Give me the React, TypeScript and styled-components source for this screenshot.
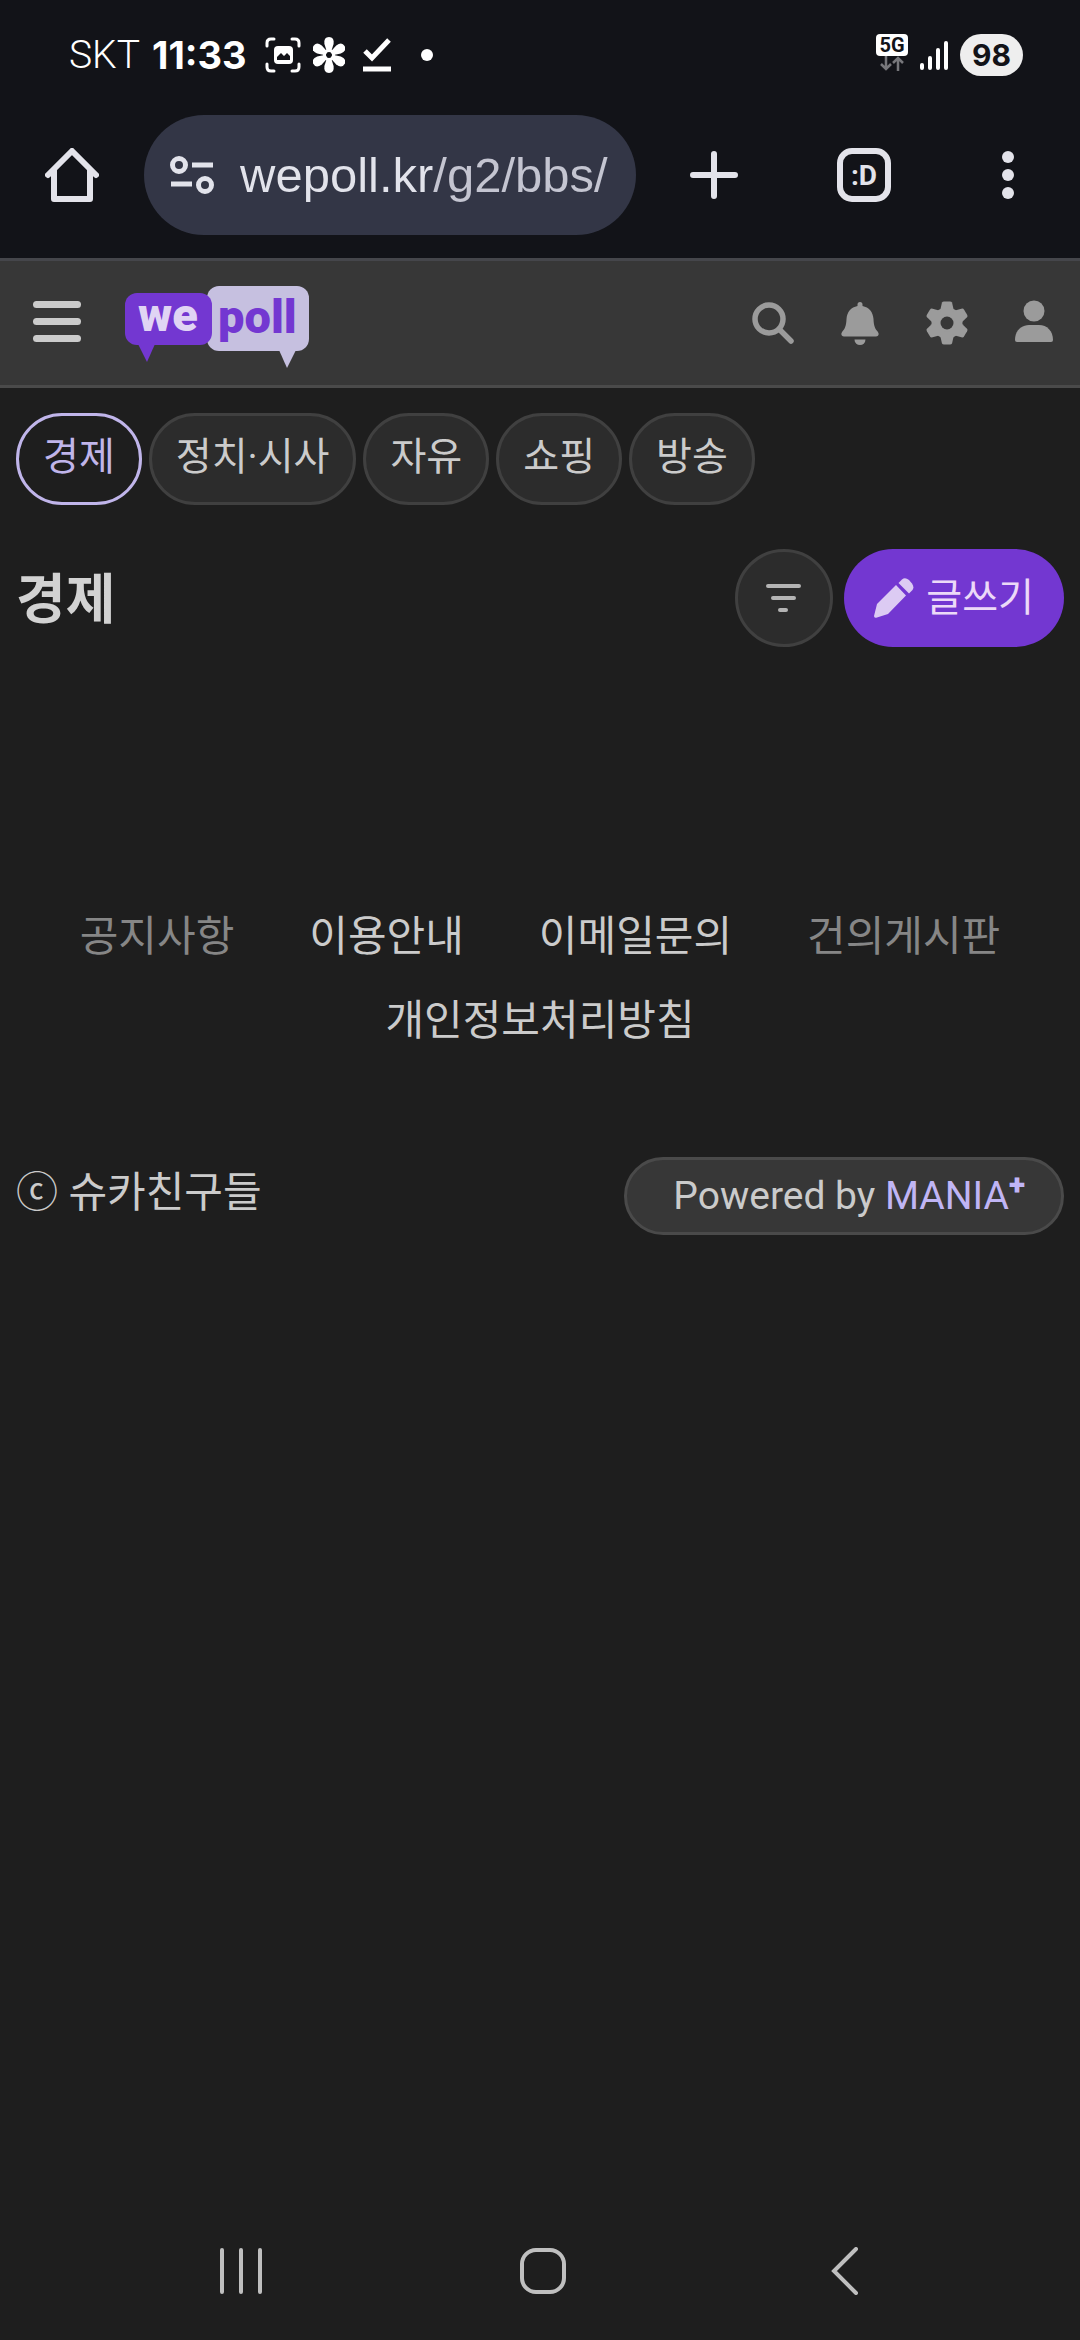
import React from "react";
import styled, { createGlobalStyle } from "styled-components";

const GlobalStyle = createGlobalStyle`
  *, *::before, *::after { box-sizing: border-box; }
  html, body { margin: 0; background: #1e1e1e; }
  body { font-family: Roboto, "Noto Sans CJK KR", sans-serif; color: #cbcbcb; }
  button, input { font: inherit; color: inherit; margin: 0; padding: 0; border: 0; background: none; outline: none; }
  button { cursor: pointer; }
  a { color: inherit; text-decoration: none; }
  svg { display: block; flex: none; }
`;

const Screen = styled.div`
  display: flex;
  flex-direction: column;
  min-height: 100vh;
`;

const Chrome = styled.div`
  background: #121318;
  padding-bottom: 23px;
`;

const StatusBar = styled.div`
  display: flex;
  align-items: center;
  justify-content: space-between;
  height: 110px;
  padding: 0 57px 0 69px;
  color: #fff;
`;

const StatusGroup = styled.div`
  display: flex;
  align-items: center;
  gap: 12px;
`;

const Carrier = styled.span`
  font-size: 39px;
  font-weight: 300;
`;

const Clock = styled.span`
  font: 700 38px Inter, sans-serif;
  margin-right: 6px;
`;

const Network = styled.div`
  display: flex;
  flex-direction: column;
  align-items: center;
  width: 32px;
  height: 38px;
  margin-bottom: 4px;
`;

const NetworkBadge = styled.span`
  width: 100%;
  border-radius: 4px;
  background: #fff;
  color: #121318;
  font-size: 20px;
  font-weight: 700;
  line-height: 22px;
  text-align: center;
`;

const Battery = styled.span`
  width: 63px;
  border-radius: 21px;
  background: #eee;
  color: #121318;
  font: 700 30px/42px Inter, sans-serif;
  text-align: center;
`;

const BrowserBar = styled.div`
  display: flex;
  align-items: center;
  padding-top: 5px;
  color: #e3e3ea;
`;

const BarButton = styled.button<{ $width: number }>`
  display: flex;
  align-items: center;
  justify-content: center;
  width: ${(p) => p.$width}px;
  height: 120px;
`;

const AddressPill = styled.div`
  display: flex;
  flex: 1;
  min-width: 0;
  align-items: center;
  gap: 25px;
  height: 120px;
  padding: 0 22px 0 25px;
  border-radius: 60px;
  background: #333646;
`;

/* The host name is drawn brighter than the path that follows it. */
const Address = styled.input`
  flex: 1;
  min-width: 0;
  height: 60px;
  font-family: "Liberation Sans", sans-serif;
  font-size: 49px;
  line-height: 60px;
  color: #e2e3eb;
  background: linear-gradient(90deg, #e2e3eb 0 193px, #c4c5d1 193px);
  background-clip: text;
  -webkit-background-clip: text;
  -webkit-text-fill-color: transparent;
`;

const TabCount = styled.span`
  display: flex;
  align-items: center;
  justify-content: center;
  width: 54px;
  height: 54px;
  border: 6px solid currentColor;
  border-radius: 15px;
  font-size: 28px;
  font-weight: 700;
`;

const SiteHeader = styled.header`
  display: flex;
  align-items: center;
  height: 130px;
  padding: 0 3px 0 33px;
  border-top: 3px solid #45464b;
  border-bottom: 3px solid #4a4a4a;
  background: #373737;
`;

const MenuButton = styled.button`
  display: flex;
  flex-direction: column;
  gap: 10px;
  width: 48px;
  margin-right: 44px;
  padding-bottom: 3px;
`;

const MenuLine = styled.span`
  height: 7px;
  border-radius: 4px;
  background: #cbcbcb;
`;

const LogoLink = styled.a`
  margin-top: 8px;
`;

const HeaderTools = styled.div`
  display: flex;
  margin-left: auto;
  color: #9b9b9b;
`;

const HeaderButton = styled.button`
  display: flex;
  align-items: center;
  justify-content: center;
  width: 87px;
  height: 96px;
`;

const Content = styled.main`
  padding: 25px 16px 0;
`;

const Chips = styled.nav`
  display: flex;
  flex-wrap: wrap;
  gap: 7px;
`;

const Chip = styled.a<{ $active?: boolean }>`
  padding: 13px 24px 17px;
  border: 3px solid ${(p) => (p.$active ? "#c0b5ea" : "#404040")};
  border-radius: 46px;
  background: ${(p) => (p.$active ? "transparent" : "#2c2c2c")};
  color: ${(p) => (p.$active ? "#c0b5ea" : "#cbcbcb")};
  font-size: 39px;
  line-height: 56px;
`;

const TitleRow = styled.div`
  display: flex;
  align-items: center;
  gap: 11px;
  margin-top: 44px;
`;

const Title = styled.h1`
  flex: 1;
  margin: 0;
  padding-top: 6px;
  font-size: 54px;
  font-weight: 700;
  line-height: 80px;
  color: #d2d2d2;
`;

const FilterButton = styled.button`
  display: flex;
  align-items: center;
  justify-content: center;
  width: 98px;
  height: 98px;
  border: 3px solid #404040;
  border-radius: 49px;
  background: #2c2c2c;
`;

const WriteButton = styled.button`
  display: flex;
  align-items: center;
  gap: 12px;
  height: 98px;
  padding: 0 30px;
  border-radius: 49px;
  background: #7337d1;
  color: #ecd9f8;
  font-size: 39px;
  line-height: 56px;
`;

const Footer = styled.footer`
  margin-top: 248px;
  padding: 0 16px;
  font-size: 42px;
`;

const FooterLinks = styled.nav`
  display: flex;
  flex-wrap: wrap;
  justify-content: center;
  column-gap: 75px;
`;

const FooterLink = styled.a<{ $dim?: boolean }>`
  color: ${(p) => (p.$dim ? "#868686" : "#cbcbcb")};
  line-height: 84px;
`;

const Credits = styled.div`
  display: flex;
  align-items: center;
  justify-content: space-between;
  margin-top: 94px;
`;

const Copyright = styled.span`
  padding-bottom: 6px;
  line-height: 62px;
`;

const Powered = styled.a`
  padding: 0 36px 0 46px;
  border: 3px solid #4a4a4a;
  border-radius: 39px;
  background: #373737;
  font-size: 39px;
  line-height: 72px;
`;

const Brand = styled.span`
  color: #c0b5f5;
`;

const Plus = styled.sup`
  font-size: 30px;
  font-weight: 900;
  line-height: 0;
`;

const SystemNav = styled.nav`
  display: grid;
  grid-template-columns: repeat(3, 1fr);
  margin-top: auto;
  padding: 0 84px 0 90px;
  color: #bfbfbf;
`;

const SystemButton = styled.button`
  display: flex;
  align-items: center;
  justify-content: center;
  height: 138px;
`;

const Logo = () => (
  <svg width="184" height="82" viewBox="0 0 184 82" aria-label="wepoll" role="img">
    <rect x="82" y="0" width="102" height="65" rx="12" fill="#c6c0e0" />
    <path d="M154 64h17l-9 18z" fill="#c6c0e0" />
    <rect x="0" y="7" width="87" height="52" rx="12" fill="#7337d1" />
    <path d="M13 58h17l-8 18z" fill="#7337d1" />
    <text x="13" y="45" fontFamily="Roboto, sans-serif" fontSize="47" fontWeight="900" fill="#e0d4f4">we</text>
    <text x="93" y="47" fontFamily="Roboto, sans-serif" fontSize="47" fontWeight="900" fill="#7337d1">poll</text>
  </svg>
);

const CaptureIcon = () => (
  <svg width="36" height="36" viewBox="0 0 36 36" fill="none" stroke="#fff" strokeWidth="3" strokeLinecap="round">
    <path d="M2 9V6q0-4 4-4h3M27 2h3q4 0 4 4v3M34 27v3q0 4-4 4h-3M9 34H6q-4 0-4-4v-3" />
    <rect x="9" y="9" width="19" height="18" rx="4" fill="#fff" stroke="none" />
    <path d="M12 20l4-4 3 3 3-3 3 3v4H12z" fill="#121318" stroke="none" />
  </svg>
);

const FlowerIcon = () => (
  <svg width="32" height="36" viewBox="0 0 32 36" fill="#fff">
    {[0, 60, 120, 180, 240, 300].map((a) => (
      <path key={a} d="M14 15L11.400 7Q10.500 0 16 0T20.600 7L18 15z" transform={`rotate(${a} 16 18)`} />
    ))}
    <circle cx="16" cy="18" r="4.500" fill="none" stroke="#fff" strokeWidth="3" />
  </svg>
);

const CheckIcon = () => (
  <svg width="40" height="34" viewBox="-6 0 40 34" fill="none" stroke="#fff" strokeWidth="5">
    <path d="M2 13l7 7L26 2M0 31h28" />
  </svg>
);

const MoreDotIcon = () => (
  <svg width="36" height="12" viewBox="0 0 36 12">
    <circle cx="18" cy="6" r="6" fill="#fff" />
  </svg>
);

const SignalIcon = () => (
  <svg width="28" height="30" viewBox="0 0 28 30" stroke="#fff" strokeWidth="4" strokeLinecap="round">
    <path d="M2 25v3M10 18v10M18 10v18M26 3v25" />
  </svg>
);

const App = () => (
  <Screen>
    <GlobalStyle />
    <Chrome>
      <StatusBar>
        <StatusGroup>
          <Carrier>SKT</Carrier>
          <Clock>11:33</Clock>
          <CaptureIcon />
          <FlowerIcon />
          <CheckIcon />
          <MoreDotIcon />
        </StatusGroup>
        <StatusGroup>
          <Network>
            <NetworkBadge>5G</NetworkBadge>
            <svg width="24" height="15" viewBox="0 0 24 15" fill="none" stroke="#77777b" strokeWidth="2.5">
              <path d="M6 0v13M1 8l5 5 5-5M18 15V2M13 7l5-5 5 5" />
            </svg>
          </Network>
          <SignalIcon />
          <Battery>98</Battery>
        </StatusGroup>
      </StatusBar>
      <BrowserBar>
        <BarButton $width={144} aria-label="홈">
          <svg width="54" height="54" viewBox="0 0 54 54" fill="none" stroke="currentColor" strokeWidth="6" strokeLinecap="round" strokeLinejoin="round">
            <path d="M3 27L27 3l24 24M9 22v29h36V22" />
          </svg>
        </BarButton>
        <AddressPill>
          <svg width="46" height="38" viewBox="0 0 46 38" fill="none" stroke="#e2e3eb" strokeWidth="5">
            <circle cx="10" cy="9" r="6.5" />
            <path d="M23 9h21M2 28h21" />
            <circle cx="36" cy="29" r="6.5" />
          </svg>
          <Address type="text" aria-label="주소" defaultValue="wepoll.kr/g2/bbs/" />
        </AddressPill>
        <BarButton $width={156} aria-label="새 탭">
          <svg width="48" height="48" viewBox="0 0 48 48" stroke="currentColor" strokeWidth="6" strokeLinecap="round">
            <path d="M24 3v42M3 24h42" />
          </svg>
        </BarButton>
        <BarButton $width={144}>
          <TabCount>:D</TabCount>
        </BarButton>
        <BarButton $width={144} aria-label="더보기">
          <svg width="12" height="48" viewBox="0 0 12 48" fill="currentColor">
            <circle cx="6" cy="6" r="6" />
            <circle cx="6" cy="24" r="6" />
            <circle cx="6" cy="42" r="6" />
          </svg>
        </BarButton>
      </BrowserBar>
    </Chrome>

    <SiteHeader>
      <MenuButton aria-label="메뉴">
        <MenuLine />
        <MenuLine />
        <MenuLine />
      </MenuButton>
      <LogoLink href="#"><Logo /></LogoLink>
      <HeaderTools>
        <HeaderButton aria-label="검색">
          <svg width="42" height="42" viewBox="0 0 42 42" fill="none" stroke="currentColor" strokeWidth="5.5" strokeLinecap="round">
            <circle cx="17" cy="17" r="14" />
            <path d="M28 28l11 11" />
          </svg>
        </HeaderButton>
        <HeaderButton aria-label="알림">
          <svg width="38" height="43" viewBox="0 0 38 43" fill="currentColor">
            <path d="M16.5 2.5a2.5 2.5 0 0 1 5 0v1.6C28 5.500 32 10 32.500 17c.3 7 1.500 9.500 4.300 12.800C38.500 32 37.500 34.500 35 34.500H3C.5 34.500-.5 32 1.200 29.800 4 26.500 5.200 24 5.500 17 6 10 10 5.500 16.500 4.100z" />
            <path d="M13.500 37.500h11a5.500 5.500 0 0 1-11 0z" />
          </svg>
        </HeaderButton>
        <HeaderButton aria-label="설정">
          <svg width="42" height="44" viewBox="-21 -22 42 44" fill="currentColor">
            <mask id="gearHole">
              <rect x="-21" y="-22" width="42" height="44" fill="#fff" />
              <circle r="6.500" fill="#000" />
            </mask>
            <g mask="url(#gearHole)">
              <circle r="15.500" />
              {[0, 60, 120].map((a) => (
                <path
                  key={a}
                  d="M-6.500-14L-5-20.500Q-4.500-21.500-3-21.500H3Q4.500-21.500 5-20.500L6.500-14V14L5 20.500Q4.500 21.500 3 21.500H-3Q-4.500 21.500-5 20.500L-6.500 14z"
                  transform={`rotate(${a})`}
                />
              ))}
            </g>
          </svg>
        </HeaderButton>
        <HeaderButton aria-label="내 정보">
          <svg width="38" height="46" viewBox="0 0 38 46" fill="currentColor">
            <circle cx="19" cy="11" r="10.500" />
            <path d="M0 40C0 31 6 25 14 25h10c8 0 14 6 14 15q0 2-2 2H2q-2 0-2-2z" />
          </svg>
        </HeaderButton>
      </HeaderTools>
    </SiteHeader>

    <Content>
      <Chips>
        <Chip href="#" $active>경제</Chip>
        <Chip href="#">정치·시사</Chip>
        <Chip href="#">자유</Chip>
        <Chip href="#">쇼핑</Chip>
        <Chip href="#">방송</Chip>
      </Chips>
      <TitleRow>
        <Title>경제</Title>
        <FilterButton aria-label="정렬">
          <svg width="36" height="30" viewBox="0 0 36 30" stroke="#b4b4b4" strokeWidth="4" strokeLinecap="round">
            <path d="M2 3h31M7 15h21M14 27h6" />
          </svg>
        </FilterButton>
        <WriteButton>
          <svg width="40" height="40" viewBox="0 0 40 40" fill="#dccbf3">
            <path d="M22 7L32 17.500 14 36 3 39.500Q0 40.500 0 38L3 26z" />
            <path d="M24.500 5l3.500-3.500Q31-1 35 2l3 3.500Q40.500 9 38.500 12L35 15.500z" />
          </svg>
          글쓰기
        </WriteButton>
      </TitleRow>
    </Content>

    <Footer>
      <FooterLinks>
        <FooterLink href="#" $dim>공지사항</FooterLink>
        <FooterLink href="#">이용안내</FooterLink>
        <FooterLink href="#">이메일문의</FooterLink>
        <FooterLink href="#" $dim>건의게시판</FooterLink>
        <FooterLink href="#">개인정보처리방침</FooterLink>
      </FooterLinks>
      <Credits>
        <Copyright>ⓒ 슈카친구들</Copyright>
        <Powered href="#">
          Powered by <Brand>MANIA<Plus>+</Plus></Brand>
        </Powered>
      </Credits>
    </Footer>

    <SystemNav>
      <SystemButton aria-label="최근 앱">
        <svg width="44" height="48" viewBox="0 0 44 48" stroke="currentColor" strokeWidth="4" strokeLinecap="round">
          <path d="M3 3v42M22 3v42M41 3v42" />
        </svg>
      </SystemButton>
      <SystemButton aria-label="홈 화면">
        <svg width="48" height="48" viewBox="0 0 48 48" fill="none" stroke="currentColor" strokeWidth="4">
          <rect x="3" y="3" width="42" height="42" rx="14" />
        </svg>
      </SystemButton>
      <SystemButton aria-label="뒤로">
        <svg width="28" height="48" viewBox="0 0 28 48" fill="none" stroke="currentColor" strokeWidth="4" strokeLinecap="round">
          <path d="M25 2L3 24l22 22" />
        </svg>
      </SystemButton>
    </SystemNav>
  </Screen>
);

export default App;
